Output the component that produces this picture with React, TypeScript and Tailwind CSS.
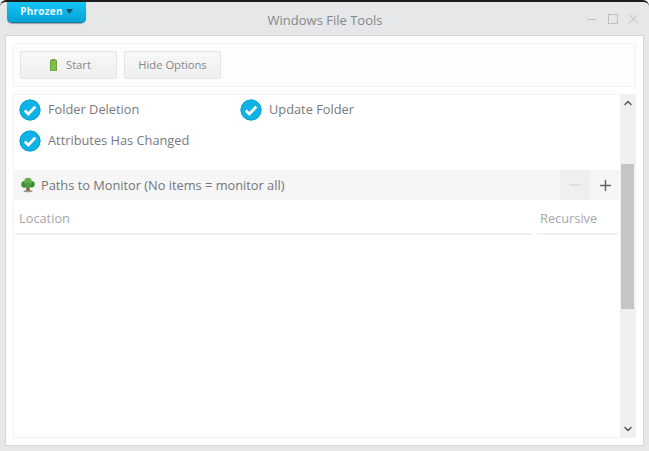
import { ChevronDown, ChevronUp, Minus, Plus } from "lucide-react"

const font = { fontFamily: '"Open Sans", sans-serif' }

function CheckItem({ label, className = "" }: { label: string; className?: string }) {
  return (
    <div className={`flex h-[31px] items-center gap-[7px] ${className}`}>
      <svg width="22" height="22" viewBox="0 0 22 22" className="shrink-0">
        <circle cx="11" cy="11" r="10.5" fill="#0fb2e6" />
        <circle cx="11" cy="11" r="10" fill="none" stroke="#0ba3d4" strokeWidth="1" />
        <path d="M5.8 11.6l3.5 3.4 7-7.4" fill="none" stroke="#fff" strokeWidth="2.8" />
      </svg>
      <span className="text-[12.8px] leading-none text-[#77797e]">{label}</span>
    </div>
  )
}

function ToolButton({ children, className = "" }: { children: React.ReactNode; className?: string }) {
  return (
    <button className={`flex h-[28px] w-[97px] items-center rounded-[2px] border border-[#e3e3e3] bg-gradient-to-b from-[#f8f8f8] to-[#efefef] text-[11.2px] text-[#85878c] ${className}`}>
      {children}
    </button>
  )
}

export default function App() {
  return (
    <div className="flex h-[451px] w-[649px] flex-col overflow-hidden rounded-t-[6px] border-t-2 border-[#1c1c1c] bg-[#e6e7e9]" style={font}>
      {/* Title bar */}
      <div className="grid h-[33px] shrink-0 grid-cols-[1fr_auto_1fr]">
        <div className="pl-[7px]">
          <button className="flex h-[21px] w-[79px] items-center justify-center gap-[3px] rounded-b-[5px] border-b border-[#0a7ea6] bg-gradient-to-b from-[#16c4f3] to-[#04a2d8] pb-[2px] text-[10px] font-bold tracking-[0.2px] text-[#e8f8fd] shadow-[0_1px_1px_rgba(0,0,0,0.3)]">
            Phrozen
            <svg width="7" height="5" viewBox="0 0 7 5"><path d="M0 0h7L3.5 5z" fill="#0d4f6b" /></svg>
          </button>
        </div>
        <div className="pt-[9px] pl-[1px] text-[13px] leading-[18px] text-[#85878c]">Windows File Tools</div>
        <div className="flex items-start justify-end pt-[12px] pr-[11px]">
          <svg width="51" height="10" viewBox="0 0 51 10" fill="none" stroke="#bdbec0" strokeWidth="1">
            <path d="M0 5.5h9" />
            <rect x="21.5" y="0.5" width="9" height="9" />
            <path d="M42 0.5l9 9M51 0.5l-9 9" />
          </svg>
        </div>
      </div>

      {/* Main panel */}
      <div className="mx-[5px] h-[411px] shrink-0 border border-[#d6d7d9] bg-white px-[7px] pt-[7px]">
        <div className="flex h-[44px] items-center gap-[7px] border border-[#f3f3f3] bg-[#fdfdfd] px-[6px]">
          <ToolButton className="gap-[9px] pl-[29px]">
            <svg width="7" height="12" viewBox="0 0 7 12">
              <rect x="2" y="0" width="3" height="1" fill="#6f9a3a" />
              <rect x="0.5" y="1" width="6" height="11" rx="0.5" fill="#7cc23c" stroke="#5f8f38" strokeWidth="0.8" />
            </svg>
            Start
          </ToolButton>
          <ToolButton className="justify-center">Hide Options</ToolButton>
        </div>

        <div className="mt-[7px] flex h-[344px] border border-[#f3f3f3]">
          <div className="min-w-0 flex-1">
            <div className="-mt-[1px] flex pl-[5px]">
              <div className="w-[221px]">
                <CheckItem label="Folder Deletion" />
                <CheckItem label="Attributes Has Changed" />
              </div>
              <CheckItem label="Update Folder" />
            </div>
            <div className="mt-[14px] flex h-[30px] items-center bg-[#f6f6f6] pl-[6px]">
              <svg width="16" height="16" viewBox="0 0 16 16" className="shrink-0">
                <path d="M6.6 9.5h2.6l.6 3.4 1.6 1.3H4.8l1.4-1.3z" fill="#8a5a2b" />
                <ellipse cx="8" cy="14.3" rx="4.5" ry="1" fill="#9a9a8a" />
                <circle cx="4.6" cy="7.4" r="3.3" fill="#3f8f3a" />
                <circle cx="11.4" cy="7.2" r="3.3" fill="#3a8a36" />
                <circle cx="8" cy="4.6" r="3.8" fill="#62b04e" />
                <circle cx="8" cy="8.2" r="2.8" fill="#4b9c42" />
              </svg>
              <span className="ml-[5px] flex-1 text-[12.8px] leading-none text-[#737579]">Paths to Monitor (No items = monitor all)</span>
              <div className="flex h-full w-[30px] items-center justify-center bg-[#efefef] text-[#cfd0d2]">
                <Minus size={18} strokeWidth={1.6} />
              </div>
              <div className="flex h-full w-[30px] items-center justify-center text-[#606267]">
                <Plus size={17} strokeWidth={2} />
              </div>
            </div>
            <div className="flex gap-[5px] pl-[1px] pr-[2px]">
              <div className="h-[35px] flex-1 border-b-2 border-[#f0f0f0] pt-[9px] pl-[4px] text-[12.8px] leading-[18px] text-[#a5a6a9]">Location</div>
              <div className="h-[35px] w-[81px] border-b-2 border-[#f0f0f0] pt-[9px] pl-[3px] text-[12.8px] leading-[18px] text-[#a5a6a9]">Recursive</div>
            </div>
          </div>

          {/* Scrollbar */}
          <div className="flex w-[15px] shrink-0 flex-col items-center bg-[#f0f0f0]">
            <div className="flex h-[69px] w-full justify-center pt-[2px] text-[#55575b]">
              <ChevronUp size={12} strokeWidth={3} />
            </div>
            <div className="h-[145px] w-[13px] bg-[#c6c6c6]" />
            <div className="flex w-full flex-1 items-end justify-center pb-[2px] text-[#55575b]">
              <ChevronDown size={12} strokeWidth={3} />
            </div>
          </div>
        </div>
      </div>
    </div>
  )
}
